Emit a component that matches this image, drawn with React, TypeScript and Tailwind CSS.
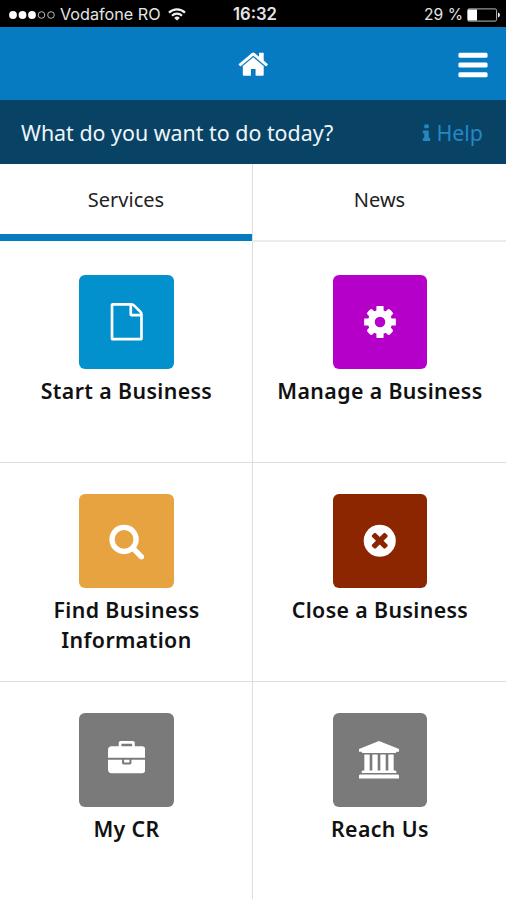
import type { ReactNode } from 'react';

const PATHS = {
  home: 'M1472 992v480q0 26-19 45t-45 19h-384v-384h-256v384h-384q-26 0-45-19t-19-45v-480q0-1 .5-3t.5-3l575-474 575 474q1 2 1 6zm223-69l-62 74q-8 9-21 11h-3q-13 0-21-7l-692-577-692 577q-12 8-24 7-13-2-21-11l-62-74q-8-10-7-23.5t11-21.5l719-599q32-26 76-26t76 26l244 204v-195q0-14 9-23t23-9h192q14 0 23 9t9 23v408l219 182q10 8 11 21.5t-7 23.5z',
  bars: 'M1664 1344v128q0 26-19 45t-45 19h-1408q-26 0-45-19t-19-45v-128q0-26 19-45t45-19h1408q26 0 45 19t19 45zm0-512v128q0 26-19 45t-45 19h-1408q-26 0-45-19t-19-45v-128q0-26 19-45t45-19h1408q26 0 45 19t19 45zm0-512v128q0 26-19 45t-45 19h-1408q-26 0-45-19t-19-45v-128q0-26 19-45t45-19h1408q26 0 45 19t19 45z',
  info: 'M1216 1344v128q0 26-19 45t-45 19h-512q-26 0-45-19t-19-45v-128q0-26 19-45t45-19h64v-384h-64q-26 0-45-19t-19-45v-128q0-26 19-45t45-19h384q26 0 45 19t19 45v576h64q26 0 45 19t19 45zm-128-1152v192q0 26-19 45t-45 19h-256q-26 0-45-19t-19-45v-192q0-26 19-45t45-19h256q26 0 45 19t19 45z',
  file: 'M1596 380q28 28 48 76t20 88v1152q0 40-28 68t-68 28h-1344q-40 0-68-28t-28-68v-1600q0-40 28-68t68-28h896q40 0 88 20t76 48zm-444-244v376h376q-10-29-22-41l-313-313q-12-12-41-22zm384 1528v-1024h-416q-40 0-68-28t-28-68v-416h-768v1536h1280z',
  search: 'M1216 832q0-185-131.5-316.5t-316.5-131.5-316.5 131.5-131.5 316.5 131.5 316.5 316.5 131.5 316.5-131.5 131.5-316.5zm512 832q0 52-38 90t-90 38q-54 0-90-38l-343-342q-179 124-399 124-143 0-273.5-55.5t-225-150-150-225-55.5-273.5 55.5-273.5 150-225 225-150 273.5-55.5 273.5 55.5 225 150 150 225 55.5 273.5q0 220-124 399l343 343q37 37 37 90z',
  close: 'M1277 1122q0-26-19-45l-181-181 181-181q19-19 19-45 0-27-19-46l-90-90q-19-19-46-19-26 0-45 19l-181 181-181-181q-19-19-45-19-27 0-46 19l-90 90q-19 19-19 46 0 26 19 45l181 181-181 181q-19 19-19 45 0 27 19 46l90 90q19 19 46 19 26 0 45-19l181-181 181 181q19 19 45 19 27 0 46-19l90-90q19-19 19-46zm387-226q0 209-103 385.5t-279.5 279.5-385.5 103-385.5-103-279.5-279.5-103-385.5 103-385.5 279.5-279.5 385.5-103 385.5 103 279.5 279.5 103 385.5z',
  briefcase: 'M640 256h512v-128h-512v128zm1152 640v480q0 66-47 113t-113 47h-1472q-66 0-113-47t-47-113v-480h672v160q0 26 19 45t45 19h320q26 0 45-19t19-45v-160h672zm-768 0v128h-256v-128h256zm768-480v384h-1792v-384q0-66 47-113t113-47h352v-160q0-40 28-68t68-28h576q40 0 68 28t28 68v160h352q66 0 113 47t47 113z',
  bank: 'M960 0l960 384v128h-128q0 26-20.5 45t-48.5 19h-1526q-28 0-48.5-19t-20.5-45h-128v-128zm-704 640h256v768h128v-768h256v768h128v-768h256v768h128v-768h256v768h59q28 0 48.5 19t20.5 45v64h-1664v-64q0-26 20.5-45t48.5-19h59v-768zm1595 960q28 0 48.5 19t20.5 45v128h-1920v-128q0-26 20.5-45t48.5-19h1782z',
};

function Icon({ name, className }: { name: keyof typeof PATHS; className: string }) {
  return (
    <svg viewBox={name === 'bank' ? '0 0 1920 1792' : '0 0 1792 1792'} className={className} fill="currentColor">
      <path d={PATHS[name]} />
    </svg>
  );
}

// Gear with four square teeth on the axes and four rounded ones between them.
function Cog() {
  return (
    <svg viewBox="-16 -16 32 32" className="size-8">
      <g fill="currentColor">
        <rect x="-3.6" y="-15.9" width="7.2" height="10" rx="0.6" />
        <rect x="-3.6" y="5.9" width="7.2" height="10" rx="0.6" />
        <rect x="-15.9" y="-3.6" width="10" height="7.2" rx="0.6" />
        <rect x="5.9" y="-3.6" width="10" height="7.2" rx="0.6" />
        <g transform="rotate(45)">
          <rect x="-3.6" y="-15.9" width="7.2" height="10" rx="2" />
          <rect x="-3.6" y="5.9" width="7.2" height="10" rx="2" />
          <rect x="-15.9" y="-3.6" width="10" height="7.2" rx="2" />
          <rect x="5.9" y="-3.6" width="10" height="7.2" rx="2" />
        </g>
      </g>
      <circle r="8.7" fill="none" stroke="currentColor" strokeWidth="6.8" />
    </svg>
  );
}

function Tile({ icon, color, iconClass = 'size-[37.5px]', className, children }: {
  icon: keyof typeof PATHS | 'cog';
  color: string;
  iconClass?: string;
  className: string;
  children: ReactNode;
}) {
  return (
    <button className={`flex flex-col items-center border-[#dedede] pl-px ${className}`}>
      <span className={`flex h-[94px] w-[94.5px] shrink-0 items-center justify-center rounded-md text-white ${color}`}>
        {icon === 'cog' ? <Cog /> : <Icon name={icon} className={iconClass} />}
      </span>
      <span className="mt-[7px] text-[21.3px] leading-[30px] font-semibold tracking-[0.38px] text-[#111]">{children}</span>
    </button>
  );
}

export default function App() {
  return (
    <div className="flex h-[900px] w-[506px] flex-col overflow-hidden bg-white font-['Noto_Sans',sans-serif]">
      <div className="grid h-[27px] shrink-0 grid-cols-[200px_1fr_200px] items-center bg-black pt-[2px] text-[#e4e4e4] font-[Inter,sans-serif]">
        <div className="flex items-center pl-[9px]">
          <svg viewBox="0 0 47 8" className="h-2 w-[47px] shrink-0">
            <g fill="#fff">
              <circle cx="4" cy="4" r="3.9" />
              <circle cx="13.5" cy="4" r="3.9" />
              <circle cx="23" cy="4" r="3.9" />
            </g>
            <g fill="none" stroke="#bbb" strokeWidth="1">
              <circle cx="32.5" cy="4" r="3.3" />
              <circle cx="42" cy="4" r="3.3" />
            </g>
          </svg>
          <span className="ml-1 text-[16.2px] leading-[25px] whitespace-nowrap">Vodafone RO</span>
          <svg viewBox="0 0 18 13" className="ml-[7px] h-[13px] w-[18px] shrink-0" fill="none" stroke="#eee" strokeWidth="2.2">
            <path d="M1 4.6a11.4 11.4 0 0 1 16 0M4 7.7a7.2 7.2 0 0 1 10 0" />
            <path d="M9 12.6 6.2 9.9a4 4 0 0 1 5.6 0z" fill="#eee" stroke="none" />
          </svg>
        </div>
        <span className="pl-[4px] text-center text-[16.7px] leading-[25px] font-semibold">16:32</span>
        <div className="flex items-center justify-end pr-[6px]">
          <span className="text-[15.6px] leading-[25px]">29 %</span>
          <svg viewBox="0 0 33 14" className="ml-1 h-[14px] w-[33px]">
            <rect x="0.6" y="0.9" width="29" height="12.2" rx="1.5" fill="none" stroke="#bbb" />
            <rect x="1" y="1.5" width="9" height="11" fill="#fff" />
            <path d="M31 4.5q2 .8 2 2.5t-2 2.5z" fill="#eee" />
          </svg>
        </div>
      </div>

      <header className="grid h-[73px] shrink-0 grid-cols-3 items-center bg-[#077bc1] pt-[2px] text-white">
        <span />
        <Icon name="home" className="ml-px size-[32.5px] justify-self-center" />
        <Icon name="bars" className="mr-[16px] size-[34px] justify-self-end" />
      </header>

      <div className="flex h-16 shrink-0 items-center justify-between bg-[#084366] pt-[2px] pr-[23px] pl-[21px] text-[21.4px] leading-8">
        <span className="text-[#f0f5fa]">What do you want to do today?</span>
        <span className="flex items-center text-[#2587c4]">
          <Icon name="info" className="-mr-[1px] size-[21px]" />
          Help
        </span>
      </div>

      <nav className="grid h-[78px] shrink-0 grid-cols-[252px_1fr] items-start text-[20px] text-[#222]">
        <button className="h-[77px] border-b-[7px] border-[#077bc1] pt-[2px]">Services</button>
        <button className="h-[78px] border-b-2 border-l border-b-[#ececec] border-l-[#dedede] pb-1">News</button>
      </nav>

      <main className="grid h-[657px] shrink-0 grid-cols-[253px_1fr] grid-rows-[221px_219px_217px]">
        <Tile icon="file" color="bg-[#0391cd]" className="border-r border-b pt-[33px]">Start a Business</Tile>
        <Tile icon="cog" color="bg-[#b500c9]" className="border-b pt-[33px]">Manage a Business</Tile>
        <Tile icon="search" color="bg-[#e7a340]" className="border-r border-b pt-[31px]">
          Find Business
          <br />
          Information
        </Tile>
        <Tile icon="close" color="bg-[#8c2600]" className="border-b pt-[31px]">Close a Business</Tile>
        <Tile icon="briefcase" color="bg-[#7a7a7a]" className="border-r pt-[31px]">My CR</Tile>
        <Tile icon="bank" color="bg-[#7a7a7a]" iconClass="mr-[2px] h-[37.5px] w-[40px]" className="pt-[31px]">Reach Us</Tile>
      </main>
    </div>
  );
}
